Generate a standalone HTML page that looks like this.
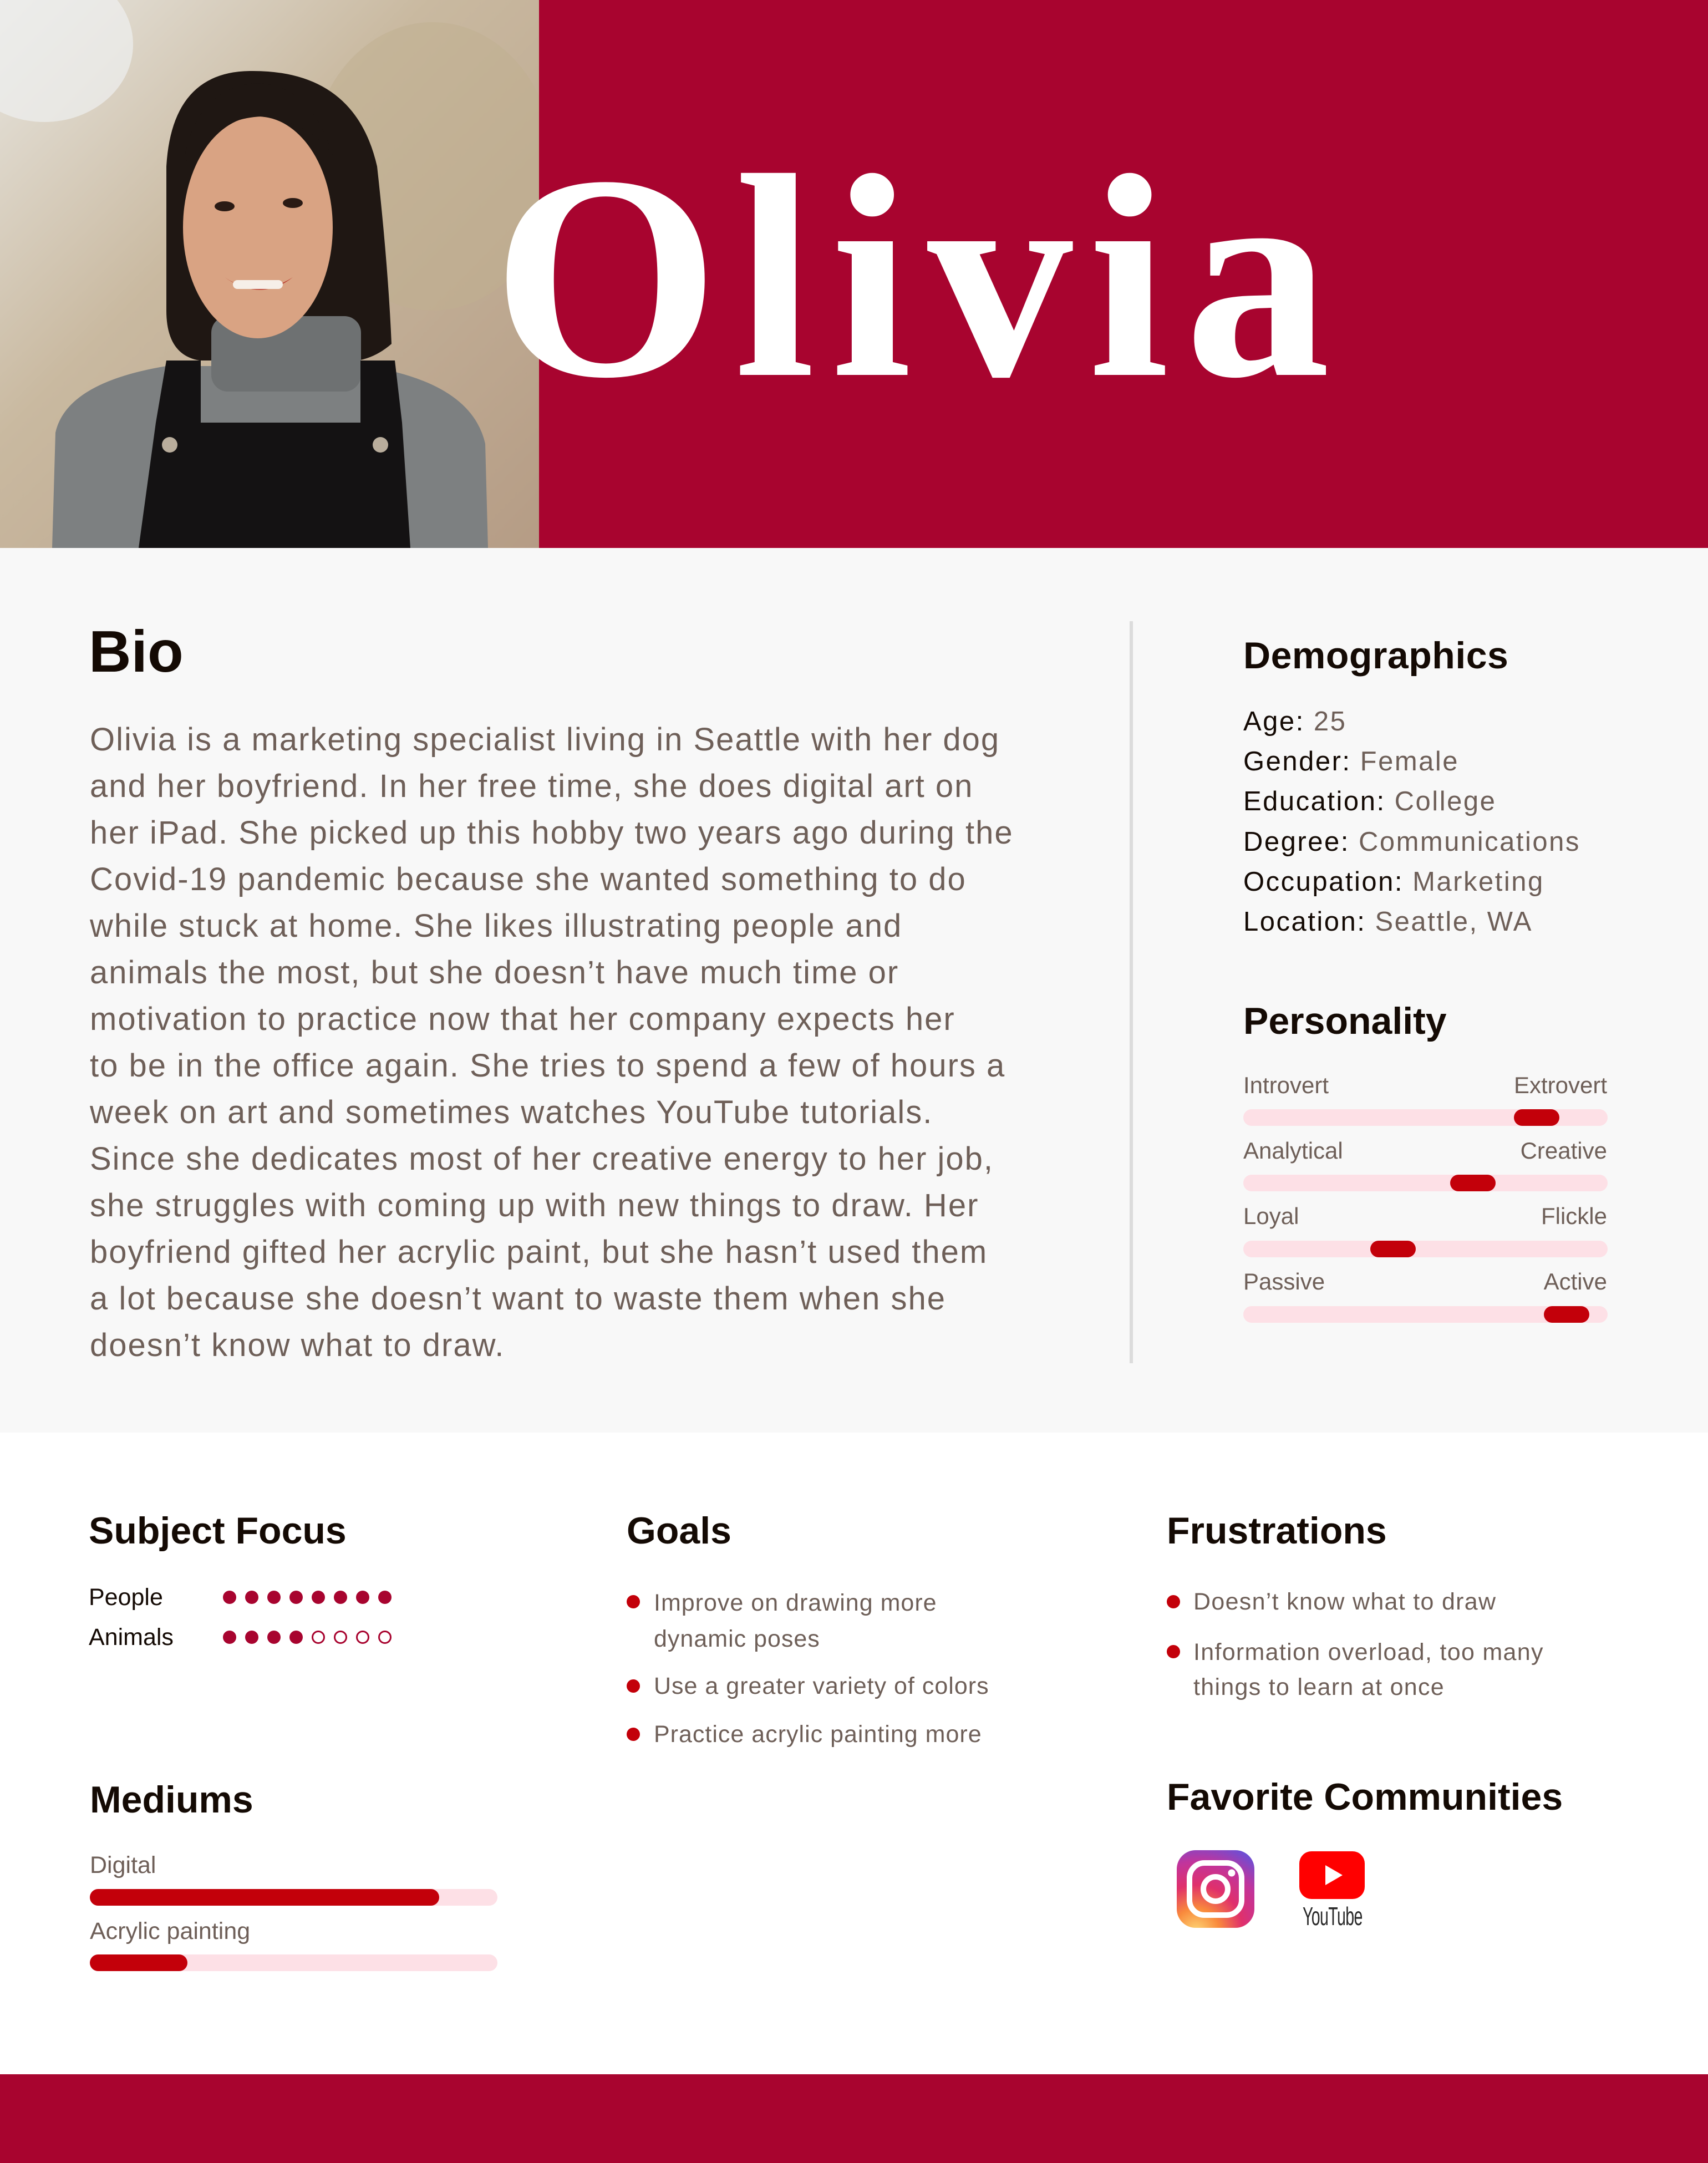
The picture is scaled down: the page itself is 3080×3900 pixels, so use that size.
<!DOCTYPE html>
<html><head><meta charset="utf-8">
<style>
*{margin:0;padding:0;box-sizing:border-box}
html,body{width:3080px;height:3900px;overflow:hidden;background:#fff;font-family:"Liberation Sans",sans-serif}
.a{position:absolute;white-space:nowrap}
.h{color:#140a04;font-weight:bold}
.t{color:#6e5f58}
.bar{position:absolute;height:30px;border-radius:15px;background:#fde0e6}
.fill{position:absolute;top:0;left:0;height:30px;border-radius:15px;background:#c3000a}
.dot{position:absolute;width:24px;height:24px;border-radius:50%;background:#a8042f}
.odot{position:absolute;width:24px;height:24px;border-radius:50%;border:3px solid #a8042f}
.bul{position:absolute;width:24px;height:24px;border-radius:50%;background:#c3000a}
</style></head><body>
<!-- header -->
<div class="a" style="left:970px;top:0;width:2110px;height:988px;background:#a8042f"></div>
<svg class="a" style="left:0;top:0" width="972" height="988" viewBox="0 0 972 988">
<defs>
<linearGradient id="bg" x1="0" y1="0" x2="1" y2="1">
<stop offset="0" stop-color="#e8e6e0"/><stop offset="0.4" stop-color="#c9b9a0"/><stop offset="1" stop-color="#b59c85"/></linearGradient>
</defs>
<rect width="972" height="988" fill="url(#bg)"/>
<ellipse cx="80" cy="80" rx="160" ry="140" fill="#eef0f0" opacity="0.7"/>
<ellipse cx="780" cy="300" rx="220" ry="260" fill="#bfb08f" opacity="0.5"/>
<path d="M300 300 Q310 130 450 128 Q640 125 680 300 Q700 480 706 620 Q660 660 600 650 L360 650 Q300 640 300 560 Z" fill="#1f1713"/>
<path d="M94 988 L100 780 Q120 690 300 660 L660 660 Q850 690 875 800 L880 988 Z" fill="#7d8081"/>
<rect x="381" y="570" width="270" height="136" rx="30" fill="#6e7172"/>
<ellipse cx="465" cy="410" rx="135" ry="200" fill="#d9a383"/>
<path d="M330 300 Q350 160 460 150 Q560 150 600 280 Q560 220 470 210 Q380 215 330 300Z" fill="#1f1713"/>
<path d="M405 500 Q465 540 528 500 Q470 545 405 500Z" fill="#b8352a"/>
<rect x="420" y="505" width="90" height="16" rx="8" fill="#f6efe8"/>
<ellipse cx="405" cy="372" rx="18" ry="9" fill="#2a1a14"/>
<ellipse cx="528" cy="366" rx="18" ry="9" fill="#2a1a14"/>
<path d="M300 650 L362 650 L362 762 L650 762 L650 650 L712 650 L725 762 L740 988 L250 988 L281 762 Z" fill="#141213"/>
<circle cx="306" cy="802" r="14" fill="#b9ad9c"/><circle cx="686" cy="802" r="14" fill="#b9ad9c"/>
</svg>
<div class="a" style="left:888px;top:237px;font-family:'Liberation Serif',serif;font-weight:bold;font-size:525px;line-height:1;color:#fff;letter-spacing:28px">Olivia</div>

<!-- gray section -->
<div class="a" style="left:0;top:988px;width:3080px;height:1595px;background:#f8f8f8"></div>
<div class="a" style="left:2037px;top:1120px;width:6px;height:1338px;background:#dcdcdc"></div>

<div class="a h" style="left:160px;top:1115px;font-size:106px;line-height:120px">Bio</div>
<div class="a t" style="left:162px;top:1292px;font-size:58px;line-height:84px;letter-spacing:2px">Olivia is a marketing specialist living in Seattle with her dog<br>and her boyfriend. In her free time, she does digital art on<br>her iPad. She picked up this hobby two years ago during the<br>Covid-19 pandemic because she wanted something to do<br>while stuck at home. She likes illustrating people and<br>animals the most, but she doesn’t have much time or<br>motivation to practice now that her company expects her<br>to be in the office again. She tries to spend a few of hours a<br>week on art and sometimes watches YouTube tutorials.<br>Since she dedicates most of her creative energy to her job,<br>she struggles with coming up with new things to draw. Her<br>boyfriend gifted her acrylic paint, but she hasn’t used them<br>a lot because she doesn’t want to waste them when she<br>doesn’t know what to draw.</div>

<div class="a h" style="left:2242px;top:1142px;font-size:68px;line-height:80px;letter-spacing:0.5px">Demographics</div>
<div class="a" style="left:2242px;top:1265px;font-size:49px;line-height:72.2px;color:#140a04;letter-spacing:2.5px">Age: <span class="t">25</span><br>Gender: <span class="t">Female</span><br>Education: <span class="t">College</span><br>Degree: <span class="t">Communications</span><br>Occupation: <span class="t">Marketing</span><br>Location: <span class="t">Seattle, WA</span></div>

<div class="a h" style="left:2242px;top:1801px;font-size:68px;line-height:80px">Personality</div>
<div class="a t" style="left:2242px;top:1932px;width:656px;font-size:42px;line-height:50px">Introvert<span style="float:right">Extrovert</span></div>
<div class="bar" style="left:2242px;top:2000px;width:657px"><div class="fill" style="left:488px;width:82px"></div></div>
<div class="a t" style="left:2242px;top:2050px;width:656px;font-size:42px;line-height:50px">Analytical<span style="float:right">Creative</span></div>
<div class="bar" style="left:2242px;top:2118px;width:657px"><div class="fill" style="left:373px;width:82px"></div></div>
<div class="a t" style="left:2242px;top:2168px;width:656px;font-size:42px;line-height:50px">Loyal<span style="float:right">Flickle</span></div>
<div class="bar" style="left:2242px;top:2237px;width:657px"><div class="fill" style="left:229px;width:82px"></div></div>
<div class="a t" style="left:2242px;top:2286px;width:656px;font-size:42px;line-height:50px">Passive<span style="float:right">Active</span></div>
<div class="bar" style="left:2242px;top:2355px;width:657px"><div class="fill" style="left:542px;width:82px"></div></div>

<!-- bottom -->
<div class="a h" style="left:160px;top:2720px;font-size:68px;line-height:80px">Subject Focus</div>
<div class="a" style="left:160px;top:2855px;font-size:43px;line-height:50px;color:#140a04">People</div>
<div class="a" style="left:160px;top:2927px;font-size:43px;line-height:50px;color:#140a04">Animals</div>
<div class="dot" style="left:402px;top:2868px"></div><div class="dot" style="left:442px;top:2868px"></div><div class="dot" style="left:482px;top:2868px"></div><div class="dot" style="left:522px;top:2868px"></div><div class="dot" style="left:562px;top:2868px"></div><div class="dot" style="left:602px;top:2868px"></div><div class="dot" style="left:642px;top:2868px"></div><div class="dot" style="left:682px;top:2868px"></div>
<div class="dot" style="left:402px;top:2940px"></div><div class="dot" style="left:442px;top:2940px"></div><div class="dot" style="left:482px;top:2940px"></div><div class="dot" style="left:522px;top:2940px"></div><div class="odot" style="left:562px;top:2940px"></div><div class="odot" style="left:602px;top:2940px"></div><div class="odot" style="left:642px;top:2940px"></div><div class="odot" style="left:682px;top:2940px"></div>

<div class="a h" style="left:1130px;top:2720px;font-size:68px;line-height:80px">Goals</div>
<div class="bul" style="left:1130px;top:2876px"></div>
<div class="a t" style="left:1179px;top:2858px;font-size:43px;line-height:65px;letter-spacing:1px">Improve on drawing more<br>dynamic poses</div>
<div class="bul" style="left:1130px;top:3028px"></div>
<div class="a t" style="left:1179px;top:3015px;font-size:43px;line-height:50px;letter-spacing:1px">Use a greater variety of colors</div>
<div class="bul" style="left:1130px;top:3115px"></div>
<div class="a t" style="left:1179px;top:3102px;font-size:43px;line-height:50px;letter-spacing:1px">Practice acrylic painting more</div>

<div class="a h" style="left:2104px;top:2720px;font-size:68px;line-height:80px">Frustrations</div>
<div class="bul" style="left:2104px;top:2876px"></div>
<div class="a t" style="left:2152px;top:2863px;font-size:43px;line-height:50px;letter-spacing:1.3px">Doesn’t know what to draw</div>
<div class="bul" style="left:2104px;top:2966px"></div>
<div class="a t" style="left:2152px;top:2948px;font-size:43px;line-height:63px;letter-spacing:1.3px">Information overload, too many<br>things to learn at once</div>

<div class="a h" style="left:162px;top:3205px;font-size:68px;line-height:80px">Mediums</div>
<div class="a t" style="left:162px;top:3338px;font-size:43px;line-height:50px">Digital</div>
<div class="bar" style="left:162px;top:3406px;width:735px"><div class="fill" style="width:630px"></div></div>
<div class="a t" style="left:162px;top:3457px;font-size:43px;line-height:50px">Acrylic painting</div>
<div class="bar" style="left:162px;top:3524px;width:735px"><div class="fill" style="width:176px"></div></div>

<div class="a h" style="left:2104px;top:3200px;font-size:68px;line-height:80px">Favorite Communities</div>
<svg class="a" style="left:2122px;top:3336px" width="140" height="140" viewBox="0 0 140 140">
<defs>
<radialGradient id="ig" cx="0.25" cy="1.05" r="1.2">
<stop offset="0" stop-color="#fdd775"/><stop offset="0.25" stop-color="#f98a3c"/><stop offset="0.5" stop-color="#e0306b"/><stop offset="0.75" stop-color="#c1349c"/><stop offset="1" stop-color="#6a4fd6"/></radialGradient>
</defs>
<rect width="140" height="140" rx="34" fill="url(#ig)"/>
<rect x="23" y="23" width="94" height="94" rx="27" fill="none" stroke="#fff" stroke-width="10"/>
<circle cx="70" cy="70" r="22" fill="none" stroke="#fff" stroke-width="10"/>
<circle cx="99" cy="41" r="6.5" fill="#fff"/>
</svg>
<svg class="a" style="left:2343px;top:3338px" width="118" height="86" viewBox="0 0 118 86">
<rect width="118" height="86" rx="22" fill="#ff0000"/>
<path d="M47 25 L78 43 L47 61 Z" fill="#fff"/>
</svg>
<div class="a" style="left:2349px;top:3432px;font-size:46px;line-height:46px;color:#282828;transform:scaleX(0.62);transform-origin:left;letter-spacing:-1px">YouTube</div>

<div class="a" style="left:0;top:3740px;width:3080px;height:160px;background:#a8042f"></div>
</body></html>
